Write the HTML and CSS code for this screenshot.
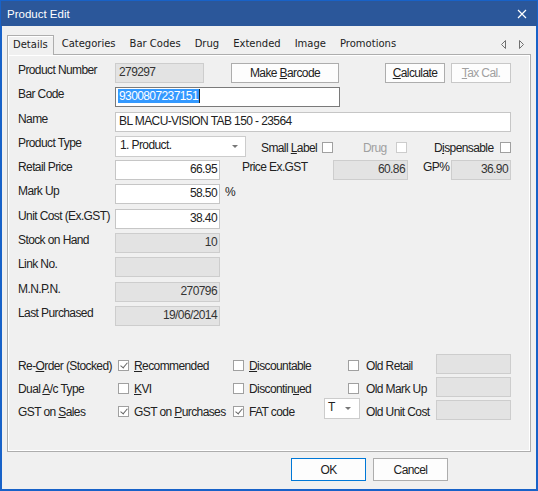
FILE: index.html
```html
<!DOCTYPE html>
<html lang="en">
<head>
  <meta charset="UTF-8">
  <title>Product Edit</title>
  <link rel="stylesheet" href="styles.css">
</head>
<body>
  <div class="window">
    <div class="titlebar">
      <span class="title">Product Edit</span>
      <svg class="close" width="10" height="10" viewBox="0 0 10 10">
        <path d="M1 1L9 9M9 1L1 9" stroke="white" stroke-width="1.2"/>
      </svg>
    </div>

    <div class="dialog">
      <div class="tabs">
        <div class="tab active">Details</div>
        <div class="tab">Categories</div>
        <div class="tab">Bar Codes</div>
        <div class="tab">Drug</div>
        <div class="tab">Extended</div>
        <div class="tab">Image</div>
        <div class="tab">Promotions</div>
        <svg class="tab-scroll" width="26" height="19" viewBox="0 0 26 19">
          <path d="M6.5 5.5L2.5 9.5L6.5 13.5Z" fill="none" stroke="#707070"/>
          <path d="M20.5 5.5L24.5 9.5L20.5 13.5Z" fill="none" stroke="#707070"/>
        </svg>
      </div>

      <div class="panel">
        <div class="form-top">
          <div class="row">
            <div class="label">Product Number</div>
            <div class="field ro left w-89">279297</div>
            <button class="btn btn-barcode">Make <u>B</u>arcode</button>
            <button class="btn btn-calc"><u>C</u>alculate</button>
            <button class="btn btn-tax" disabled><u>T</u>ax Cal.</button>
          </div>
          <div class="row">
            <div class="label">Bar Code</div>
            <div class="field focus left w-225"><span class="selection">9300807237151</span></div>
          </div>
          <div class="row">
            <div class="label">Name</div>
            <div class="field left w-396">BL MACU-VISION TAB 150 - 23564</div>
          </div>
          <div class="row">
            <div class="label">Product Type</div>
            <div class="combo w-131">1. Product.<span class="arrow"></span></div>
            <div class="check-right small-label"><span>Small <u>L</u>abel</span><span class="check"></span></div>
            <div class="check-right drug disabled"><span>Dru<u>g</u></span><span class="check"></span></div>
            <div class="check-right dispensable"><span>D<u>i</u>spensable</span><span class="check"></span></div>
          </div>
          <div class="row">
            <div class="label">Retail Price</div>
            <div class="field w-105">66.95</div>
            <div class="label side price-label">Price Ex.GST</div>
            <div class="field ro w-75">60.86</div>
            <div class="label side gp-label">GP%</div>
            <div class="field ro w-60">36.90</div>
          </div>
          <div class="row">
            <div class="label">Mark Up</div>
            <div class="field w-105">58.50</div>
            <div class="unit">%</div>
          </div>
          <div class="row">
            <div class="label">Unit Cost (Ex.GST)</div>
            <div class="field w-105">38.40</div>
          </div>
          <div class="row">
            <div class="label">Stock on Hand</div>
            <div class="field ro w-105">10</div>
          </div>
          <div class="row">
            <div class="label">Link No.</div>
            <div class="field ro w-105"></div>
          </div>
          <div class="row">
            <div class="label">M.N.P.N.</div>
            <div class="field ro w-105">270796</div>
          </div>
          <div class="row">
            <div class="label">Last Purchased</div>
            <div class="field ro w-105">19/06/2014</div>
          </div>
        </div>

        <div class="form-bottom">
          <div class="cell"><span>Re-<u>O</u>rder (Stocked)</span></div>
          <div class="cell"><span class="check checked"></span><span><u>R</u>ecommended</span></div>
          <div class="cell"><span class="check"></span><span><u>D</u>iscountable</span></div>
          <div class="cell wide"><span class="check"></span><span>Old Retail</span></div>
          <div class="field ro"></div>

          <div class="cell"><span>Dual <u>A</u>/c Type</span></div>
          <div class="cell"><span class="check"></span><span><u>K</u>VI</span></div>
          <div class="cell"><span class="check"></span><span>Discontin<u>u</u>ed</span></div>
          <div class="cell wide"><span class="check"></span><span>Old Mark Up</span></div>
          <div class="field ro"></div>

          <div class="cell"><span>GST on <u>S</u>ales</span></div>
          <div class="cell"><span class="check checked"></span><span>GST on <u>P</u>urchases</span></div>
          <div class="cell"><span class="check checked"></span><span>FAT code</span></div>
          <div class="cell wide"><div class="combo fat">T<span class="arrow"></span></div><span>Old Unit Cost</span></div>
          <div class="field ro"></div>
        </div>
      </div>

      <div class="actions">
        <button class="btn btn-ok">OK</button>
        <button class="btn btn-cancel">Cancel</button>
      </div>
    </div>
  </div>
</body>
</html>
```

FILE: styles.css
```css
body {
  margin: 0;
  background-color: #f0f0f0;
  font-family: 'Liberation Sans', Arial, sans-serif;
  font-size: 12px;
  letter-spacing: -0.6px;
  color: #222;
}

.window {
  width: 538px;
  height: 491px;
  box-sizing: border-box;
  border: 1px solid #1862c8;
  display: flex;
  flex-direction: column;
}

.titlebar {
  height: 25px;
  flex: none;
  background-color: #2b579a;
  color: white;
  display: flex;
  align-items: center;
  justify-content: space-between;
  padding: 0 10px 0 6px;
}

.titlebar .title {
  font-size: 11.5px;
  letter-spacing: 0;
  padding-top: 1px;
}

.titlebar .close {
  margin-top: 1px;
}

.dialog {
  flex: 1;
  border: 1px solid #1862c8;
  border-top: 0;
  background-color: #f0f0f0;
  padding: 9px 5px 0 5px;
  display: flex;
  flex-direction: column;
}

/* tab strip */

.tabs {
  display: flex;
  height: 19px;
  position: relative;
  z-index: 1;
  font-family: 'DejaVu Sans', Verdana, sans-serif;
  font-size: 10px;
  letter-spacing: 0;
  color: #222;
}

.tab {
  padding: 0 7px;
  line-height: 18px;
  white-space: nowrap;
}

.tab.active {
  height: 20px;
  box-sizing: border-box;
  border: 1px solid #adadad;
  border-bottom: 0;
  padding: 0 5px;
  line-height: 17px;
  margin-right: 1px;
  background-color: #f0f0f0;
  box-shadow: inset 1px 1px 0 #fff;
}

.tab-scroll {
  margin-left: auto;
  margin-right: 6px;
}

/* tab page */

.panel {
  height: 398px;
  box-sizing: border-box;
  border: 1px solid #adadad;
  box-shadow: inset 1px 1px 0 #fff, inset -1px -1px 0 #fff;
  padding: 8px 10px 0 10px;
}

.form-top {
  display: flex;
  flex-direction: column;
  gap: 4.3px;
}

.row {
  display: flex;
  align-items: flex-start;
  height: 20px;
}

.label {
  width: 97px;
  flex: none;
  line-height: 14px;
  white-space: nowrap;
}

.label.side {
  width: auto;
}

.price-label {
  margin-left: 22px;
  width: 91px !important;
}

.gp-label {
  margin-left: 15px;
  width: 28px !important;
}

.unit {
  margin-left: 5px;
  line-height: 16px;
}

.field {
  height: 20px;
  box-sizing: border-box;
  flex: none;
  border: 1px solid #c6c6c6;
  background-color: #fff;
  padding: 0 2px 0 3px;
  line-height: 16px;
  text-align: right;
  white-space: nowrap;
  overflow: hidden;
}

.field.ro {
  background-color: #e3e3e3;
  border-color: #cdcdcd;
  color: #333;
}

.field.left {
  text-align: left;
}

.field.focus {
  border-color: #7a7a7a;
  padding-left: 2px;
}

.selection {
  background-color: #3399ff;
  color: white;
  border-right: 1px solid #222;
  padding: 0 1px;
}

.w-60 { width: 60px; }
.w-75 { width: 75px; }
.w-89 { width: 89px; }
.w-105 { width: 105px; }
.w-131 { width: 131px; }
.w-225 { width: 225px; }
.w-396 { width: 396px; }

.combo {
  height: 21px;
  box-sizing: border-box;
  flex: none;
  border: 1px solid #cccccc;
  background-color: #fff;
  padding-left: 4px;
  line-height: 17px;
  position: relative;
}

.combo .arrow {
  position: absolute;
  right: 7px;
  top: 8px;
  border-left: 3px solid transparent;
  border-right: 3px solid transparent;
  border-top: 3px solid #777;
}

/* checkboxes */

.check {
  width: 11px;
  height: 11px;
  box-sizing: border-box;
  flex: none;
  border: 1px solid #a0a0a0;
  background-color: #fff;
  display: inline-block;
  position: relative;
}

.check.checked::after {
  content: "";
  position: absolute;
  left: 3px;
  top: 0px;
  width: 3px;
  height: 6px;
  border-right: 1px solid #666;
  border-bottom: 1px solid #666;
  transform: rotate(40deg);
}

.check-right {
  display: flex;
  align-items: center;
  justify-content: space-between;
  height: 20px;
  box-sizing: border-box;
  padding-top: 4px;
  line-height: 14px;
  white-space: nowrap;
}

.small-label {
  margin-left: 15px;
  width: 72px;
}

.drug {
  margin-left: 30px;
  width: 44px;
}

.dispensable {
  margin-left: 27px;
  width: 77px;
}

.disabled {
  color: #a0a0a0;
}

.disabled .check {
  border-color: #cccccc;
}

/* lower block */

.form-bottom {
  margin-top: 28px;
  display: grid;
  grid-template-columns: 100px 115px 115px 88px 75px;
  grid-auto-rows: 20px;
  row-gap: 3px;
}

.cell {
  display: flex;
  align-items: center;
  gap: 5px;
  height: 20px;
  box-sizing: border-box;
  padding-top: 4px;
  line-height: 14px;
  white-space: nowrap;
}

.cell.wide {
  gap: 7px;
}

.combo.fat {
  width: 36px;
  margin-left: -24px;
  margin-right: -1px;
  margin-top: -6px;
  padding-left: 3px;
}

.combo.fat .arrow {
  right: 8px;
}

/* buttons */

.btn {
  font-family: inherit;
  font-size: 12px;
  letter-spacing: -0.6px;
  color: #222;
  background-color: #fdfdfd;
  border: 1px solid #adadad;
  height: 20px;
  padding: 0;
  line-height: 16px;
  flex: none;
}

.btn-barcode {
  width: 108px;
  margin-left: 27px;
}

.btn-calc {
  width: 60px;
  margin-left: 46px;
}

.btn-tax {
  width: 60px;
  margin-left: 6px;
  color: #a0a0a0;
  border-color: #c8c8c8;
}

.actions {
  display: flex;
  justify-content: flex-end;
  gap: 7px;
  margin-top: 6px;
  padding-right: 83px;
}

.actions .btn {
  width: 75px;
  height: 23px;
}

.btn-ok {
  border-color: #0078d7 !important;
}
```
